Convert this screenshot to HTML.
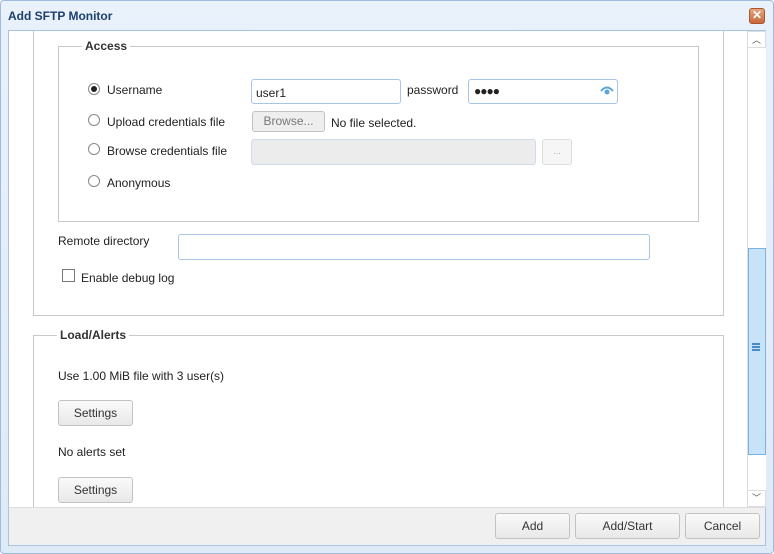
<!DOCTYPE html>
<html><head><style>
*{box-sizing:border-box;margin:0;padding:0}
body{width:774px;height:554px;background:#fff;font-family:"Liberation Sans",Arial,sans-serif;font-size:12px;color:#222;position:relative;overflow:hidden}
.a{position:absolute}
.win{left:0;top:0;width:774px;height:554px;border:1px solid #9fbbdc;border-radius:4px;background:linear-gradient(#e9f1fb,#dfeaf7)}
.title{left:8px;top:9px;font-weight:bold;font-size:12px;color:#1e3f6e}
.close{left:749px;top:8px;width:16px;height:16px;border-radius:3px;background:linear-gradient(#e7a57f,#c9683c);border:1px solid #a9552e;color:#fff;font-size:12px;line-height:13px;text-align:center;font-weight:bold}
.content{left:8px;top:30px;width:758px;height:477px;background:#fff;border:1px solid #a9c3e2;border-bottom:none}
.bar{left:8px;top:507px;width:758px;height:39px;background:#f0f0f0;border:1px solid #a9c3e2;border-top:1px solid #ddd}
.fs{border:1px solid #c8c8c8}
.leg{background:#fff;padding:0 3px;font-weight:bold;font-size:12px;color:#333}
.inp{border:1px solid #a8c4e6;border-radius:3px;background:#fff}
.btn{border:1px solid #c2c2c2;border-radius:3px;background:linear-gradient(#fafafa,#e8e8e8);text-align:center;color:#333;font-size:12px}
.radio{width:12px;height:12px;border:1px solid #888;border-radius:50%;background:#fff}
</style></head><body>
<div class="a win"></div>
<div class="a title">Add SFTP Monitor</div>
<div class="a close">✕</div>
<div class="a content"></div>
<div class="a fs" style="left:33px;top:31px;width:691px;height:285px;border-top:none"></div>
<div class="a fs" style="left:58px;top:46px;width:641px;height:176px"></div>
<div class="a leg" style="left:82px;top:39px">Access</div>
<div class="a radio" style="left:88px;top:83px"></div><div class="a" style="left:91px;top:86px;width:6px;height:6px;border-radius:50%;background:#222"></div>
<div class="a" style="left:107px;top:83px">Username</div>
<div class="a inp" style="left:251px;top:79px;width:150px;height:25px"></div>
<div class="a" style="left:256px;top:86px">user1</div>
<div class="a" style="left:407px;top:83px">password</div>
<div class="a inp" style="left:468px;top:79px;width:150px;height:25px"></div>
<div class="a" style="left:474px;top:84px;font-size:12px;font-weight:bold;letter-spacing:-1px">●●●●</div>
<svg class="a" style="left:600px;top:85px" width="14" height="12" viewBox="0 0 14 12"><path d="M1 6 Q7 -1 13 6" stroke="#5ea4dc" stroke-width="2" fill="none"/><circle cx="7" cy="7" r="2.5" fill="#5ea4dc"/></svg>
<div class="a radio" style="left:88px;top:114px"></div>
<div class="a" style="left:107px;top:115px">Upload credentials file</div>
<div class="a btn" style="left:252px;top:111px;width:73px;height:21px;line-height:19px;color:#777;background:#eee">Browse...</div>
<div class="a" style="left:331px;top:116px">No file selected.</div>
<div class="a radio" style="left:88px;top:143px"></div>
<div class="a" style="left:107px;top:144px">Browse credentials file</div>
<div class="a" style="left:251px;top:139px;width:285px;height:26px;border:1px solid #cfdbea;border-radius:3px;background:#ececec"></div>
<div class="a btn" style="left:542px;top:139px;width:30px;height:26px;line-height:22px;color:#aaa;font-size:9px;background:#f6f6f6;border-color:#ddd">...</div>
<div class="a radio" style="left:88px;top:175px"></div>
<div class="a" style="left:107px;top:176px">Anonymous</div>
<div class="a" style="left:58px;top:234px">Remote directory</div>
<div class="a inp" style="left:178px;top:234px;width:472px;height:26px"></div>
<div class="a" style="left:62px;top:269px;width:13px;height:13px;border:1px solid #777;background:#fff"></div>
<div class="a" style="left:81px;top:271px">Enable debug log</div>
<div class="a fs" style="left:33px;top:335px;width:691px;height:190px"></div>
<div class="a leg" style="left:57px;top:328px">Load/Alerts</div>
<div class="a" style="left:58px;top:369px">Use 1.00 MiB file with 3 user(s)</div>
<div class="a btn" style="left:58px;top:400px;width:75px;height:26px;line-height:24px">Settings</div>
<div class="a" style="left:58px;top:445px">No alerts set</div>
<div class="a btn" style="left:58px;top:477px;width:75px;height:26px;line-height:24px">Settings</div>
<div class="a" style="left:747px;top:31px;width:19px;height:476px;background:#fff;border-left:1px solid #ddd"></div>
<div class="a" style="left:747px;top:31px;width:19px;height:17px;border:1px solid #ddd;background:#fff;font-size:9px;text-align:center;line-height:17px;color:#555">︿</div>
<div class="a" style="left:748px;top:248px;width:18px;height:207px;background:#c8e2f7;border:1px solid #7ab2e0"></div>
<div class="a" style="left:752px;top:343px;width:8px;height:8px;border-top:2px solid #4a8cc8;border-bottom:2px solid #4a8cc8"><div style="margin-top:1px;height:2px;background:#4a8cc8"></div></div>
<div class="a" style="left:747px;top:490px;width:19px;height:17px;border:1px solid #ddd;background:#fff;font-size:9px;text-align:center;line-height:15px;color:#555">﹀</div>
<div class="a bar"></div>
<div class="a btn" style="left:495px;top:513px;width:75px;height:26px;line-height:24px">Add</div>
<div class="a btn" style="left:575px;top:513px;width:105px;height:26px;line-height:24px">Add/Start</div>
<div class="a btn" style="left:685px;top:513px;width:75px;height:26px;line-height:24px">Cancel</div>
</body></html>
